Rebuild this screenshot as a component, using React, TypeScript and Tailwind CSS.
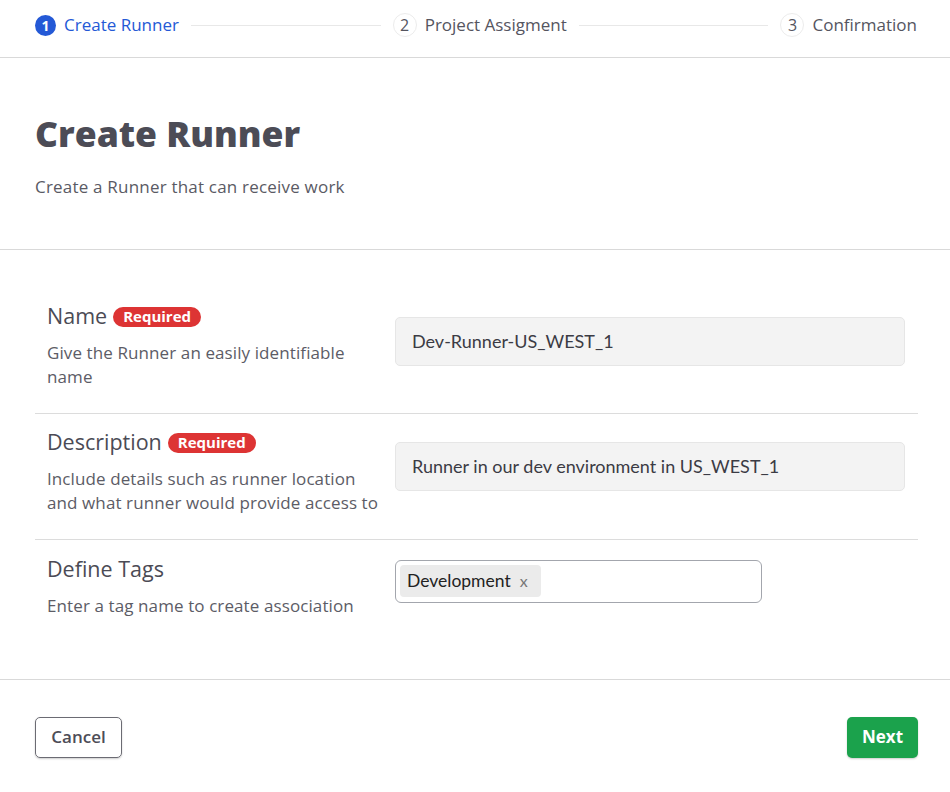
const font = "font-['Open_Sans',sans-serif]";
const inputFont = "font-['Lato',sans-serif]";

function Step({ n, label, active }: { n: number; label: string; active?: boolean }) {
  return (
    <div className="flex items-center gap-2 shrink-0">
      {active ? (
        <span className="w-[21px] h-[21px] rounded-full bg-[#2459d6] text-white text-[14px] font-bold flex items-center justify-center">
          {n}
        </span>
      ) : (
        <span className="w-[24px] h-[24px] rounded-full border border-[#ececec] text-[#55555f] text-[16px] flex items-center justify-center">
          {n}
        </span>
      )}
      <span className={`text-[17px] ${active ? "text-[#2459d6]" : "text-[#55555f]"}`}>{label}</span>
    </div>
  );
}

function Required() {
  return (
    <span className="ml-1.5 inline-flex items-center h-[20px] px-[10px] rounded-full bg-[#dd3434] text-white text-[15px] font-bold leading-none">
      Required
    </span>
  );
}

function Row({
  label,
  required,
  desc,
  children,
  last,
  rowPad,
  inputPad,
}: {
  label: string;
  required?: boolean;
  desc: string;
  children: React.ReactNode;
  last?: boolean;
  rowPad: string;
  inputPad: string;
}) {
  return (
    <div className={`flex px-3 pb-6 ${rowPad} ${last ? "" : "border-b border-[#dcdcdc]"}`}>
      <div className="w-[348px] shrink-0">
        <div className="flex items-center h-7">
          <span className="text-[21.5px] text-[#4b4b55]">{label}</span>
          {required && <Required />}
        </div>
        <p className="mt-2.5 w-[336px] text-[17px] tracking-[0.1px] leading-6 text-[#5c5c66]">{desc}</p>
      </div>
      <div className={`flex-1 ${inputPad}`}>{children}</div>
    </div>
  );
}

export default function App() {
  return (
    <div className={`${font} bg-white w-[950px] min-h-[792px]`}>
      <div className="h-[58px] border-b border-[#d9d9d9] flex items-center pl-[35px] pr-[33px] pb-[7px]">
        <Step n={1} label="Create Runner" active />
        <div className="flex-1 h-px bg-[#e8e8e8] mx-3" />
        <Step n={2} label="Project Assigment" />
        <div className="flex-1 h-px bg-[#e8e8e8] mx-3" />
        <Step n={3} label="Confirmation" />
      </div>

      <div className="pl-[35px] pr-[32px] pt-[51px] pb-[49px] border-b border-[#d9d9d9]">
        <h1 className="text-[35.5px] leading-[48px] font-extrabold text-[#4c4c56]">Create Runner</h1>
        <p className="mt-[17px] text-[17px] tracking-[0.2px] text-[#5a5a64]">Create a Runner that can receive work</p>
      </div>

      <div className="pl-[35px] pr-[32px] pt-[37px] pb-[37px] border-b border-[#d9d9d9]">
        <Row label="Name" required desc="Give the Runner an easily identifiable name" rowPad="pt-4" inputPad="pt-[14px] pr-[1px]">
          <div className={`${inputFont} h-[49px] rounded-[5px] bg-[#f3f3f3] border border-[#e6e6e6] flex items-center px-4 text-[18px] text-[#3b3b44]`}>
            Dev-Runner-US_WEST_1
          </div>
        </Row>
        <Row
          label="Description"
          required
          desc="Include details such as runner location and what runner would provide access to"
          rowPad="pt-[15px]"
          inputPad="pt-[13px] pr-[1px]"
        >
          <div className={`${inputFont} h-[49px] rounded-[5px] bg-[#f3f3f3] border border-[#e6e6e6] flex items-center px-4 text-[18px] text-[#3b3b44]`}>
            Runner in our dev environment in US_WEST_1
          </div>
        </Row>
        <Row label="Define Tags" desc="Enter a tag name to create association" last rowPad="pt-4" inputPad="pt-[4px]">
          <div className="w-[367px] h-[43px] rounded-[6px] border border-[#a3a6ad] flex items-center px-1">
            <span className={`${inputFont} h-[32px] rounded-[4px] bg-[#ebebeb] flex items-center gap-[9px] pl-[7px] pr-[13px] text-[17.5px] text-[#222]`}>
              Development
              <span className="text-[16px] text-[#777] leading-none">x</span>
            </span>
          </div>
        </Row>
      </div>

      <div className="pl-[35px] pr-[32px] pt-[37px] pb-[34px] flex items-center justify-between">
        <button className="h-[41px] w-[87px] rounded-[5px] border border-[#6b6b73] shadow-[0_1px_2px_rgba(0,0,0,0.2)] text-[17px] font-semibold text-[#4d4d57]">
          Cancel
        </button>
        <button className="h-[41px] w-[71px] rounded-[5px] bg-[#1ba24c] shadow-[0_1px_2px_rgba(0,0,0,0.2)] text-[17px] font-bold text-white">
          Next
        </button>
      </div>
    </div>
  );
}
